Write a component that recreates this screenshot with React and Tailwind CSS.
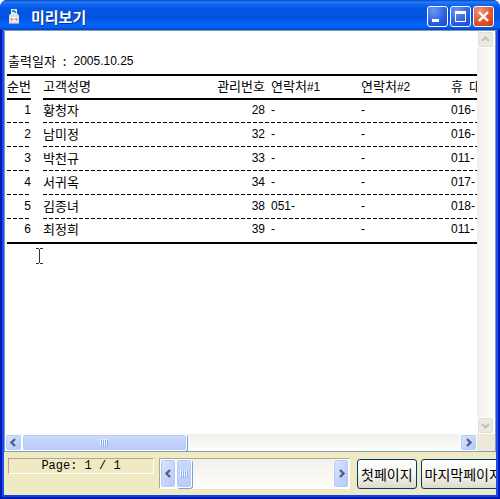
const customers = [
  { no: 1, name: '황청자', code: 28, tel1: '-', tel2: '-', mobile: '016-' },
  { no: 2, name: '남미정', code: 32, tel1: '-', tel2: '-', mobile: '016-' },
  { no: 3, name: '박천규', code: 33, tel1: '-', tel2: '-', mobile: '011-' },
  { no: 4, name: '서귀옥', code: 34, tel1: '-', tel2: '-', mobile: '017-' },
  { no: 5, name: '김종녀', code: 38, tel1: '051-', tel2: '-', mobile: '018-' },
  { no: 6, name: '최정희', code: 39, tel1: '-', tel2: '-', mobile: '011-' },
];

const CHEVRONS = {
  up: 'M1 6 L4.5 2.5 L8 6',
  down: 'M1 3 L4.5 6.5 L8 3',
  left: 'M6 1 L2.5 4.5 L6 8',
  right: 'M3 1 L6.5 4.5 L3 8',
};

const ArrowButton = ({ direction, label, disabled, className = '' }) => (
  <button
    type="button"
    aria-label={label}
    disabled={disabled}
    className={`flex shrink-0 items-center justify-center rounded-[3px] border border-white ${
      disabled
        ? 'bg-[#ecebe2] text-[#c5c4b8] shadow-[inset_0_0_0_1px_#dfded3]'
        : 'bg-gradient-to-br from-[#dce6fe] to-[#b2c7f8] text-[#4d6185] shadow-[inset_0_0_0_1px_#b7caf5]'
    } ${className}`}
  >
    <svg width="9" height="9" viewBox="0 0 9 9" fill="none" stroke="currentColor" strokeWidth="2.4">
      <path d={CHEVRONS[direction]} />
    </svg>
  </button>
);

const Grip = () => (
  <svg width="9" height="8" viewBox="0 0 9 8" shapeRendering="crispEdges">
    <path d="M0.5 0v7M2.5 0v7M4.5 0v7M6.5 0v7" stroke="#eef4fe" />
    <path d="M1.5 1v7M3.5 1v7M5.5 1v7M7.5 1v7" stroke="#8cb0f8" />
  </svg>
);

const Thumb = ({ className = '' }) => (
  <div
    className={`flex items-center justify-center rounded-[3px] border border-white bg-gradient-to-b from-[#cbdafd] to-[#b9cbf8] shadow-[inset_0_0_0_1px_#b7caf5,1px_1px_0_#7f9fd6] ${className}`}
  >
    <Grip />
  </div>
);

const CaptionButton = ({ label, className, children }) => (
  <button
    type="button"
    aria-label={label}
    className={`h-[21px] w-[21px] rounded-[3px] border border-white ${className}`}
  >
    <svg width="19" height="19" viewBox="0 0 19 19" fill="none" stroke="white">
      {children}
    </svg>
  </button>
);

const TitleBar = () => (
  <header className="flex h-[30px] shrink-0 items-center bg-[linear-gradient(180deg,#0148c8_0%,#2c7df5_7%,#1168f3_14%,#0357e4_28%,#0254e0_60%,#0364fb_80%,#0361f4_90%,#0143c0_100%)] pt-[3px] pr-[6px] pl-[7px]">
    <svg width="14" height="16" viewBox="0 0 14 16" aria-hidden="true">
      <path d="M4 0h6v5H4z" fill="#d6efff" />
      <path d="M5 1h3v2H5z" fill="#2fa08a" />
      <path d="M7 2h2v2H7z" fill="#4a8fe0" />
      <path d="M3 5h8l1 2v8H2V7z" fill="#e2e2e6" />
      <path d="M2 14h10v1H2z" fill="#a8a49c" />
      <path d="M4 8h6v4H4z" fill="#fff" />
      <path d="M4.5 11.5v-2l1.5 1 1-1 1 1 1.5-1v2" fill="none" stroke="#d4655e" />
    </svg>
    <h1 className="ml-[10px] grow text-[15px] leading-5 font-bold text-white [text-shadow:1px_1px_0_#0b2f83]">
      미리보기
    </h1>
    <div className="flex gap-[2px]">
      <CaptionButton label="최소화" className="bg-[radial-gradient(circle_at_30%_20%,#6c97f2,#2a5fe0_60%,#1c49cf)]">
        <path d="M4 13.5h7" strokeWidth="3" />
      </CaptionButton>
      <CaptionButton label="최대화" className="bg-[radial-gradient(circle_at_30%_20%,#6c97f2,#2a5fe0_60%,#1c49cf)]">
        <path d="M4.5 5v9.5h10V5" />
        <path d="M4 5.5h11" strokeWidth="3" />
      </CaptionButton>
      <CaptionButton label="닫기" className="bg-[radial-gradient(circle_at_30%_20%,#ee9478,#e0522c_60%,#c93a12)]">
        <path d="M5 5l9 9M14 5l-9 9" strokeWidth="2.4" />
      </CaptionButton>
    </div>
  </header>
);

const headRule = 'border-b-2 border-black';
const dashRule =
  'bg-[repeating-linear-gradient(90deg,#000_0_4px,transparent_4px_6px)] bg-[length:100%_1px] bg-bottom bg-no-repeat';
const numeric = "font-['Liberation_Sans',sans-serif] text-[12px]";

const ReportTable = () => (
  <table className="w-[534px] table-fixed border-separate border-spacing-0 border-y-2 border-black text-left">
    <colgroup>
      <col className="w-[24px]" />
      <col className="w-[12px]" />
      <col className="w-[144px]" />
      <col className="w-[84px]" />
      <col className="w-[90px]" />
      <col className="w-[90px]" />
      <col className="w-[90px]" />
    </colgroup>
    <thead>
      <tr className="h-6 whitespace-nowrap [&>th]:p-0 [&>th]:pb-[2px] [&>th]:font-normal">
        <th scope="col" className={headRule}>순번</th>
        <td className="p-0" />
        <th scope="col" className={headRule}>고객성명</th>
        <th scope="col" className={`${headRule} pr-[6px]! text-right`}>관리번호</th>
        <th scope="col" className={headRule}>
          연락처<span className={`${numeric} leading-3`}>#1</span>
        </th>
        <th scope="col" className={headRule}>
          연락처<span className={`${numeric} leading-3`}>#2</span>
        </th>
        <th scope="col" className={headRule}>
          <span className="flex gap-[6px]">
            <span>휴</span>
            <span>대</span>
            <span>폰</span>
          </span>
        </th>
      </tr>
    </thead>
    <tbody>
      {customers.map((c, i) => {
        const rule = i < customers.length - 1 ? dashRule : '';
        return (
          <tr key={c.no} className="h-6 first:h-[23px] last:h-[23px] [&>td]:p-0 [&>td]:pb-[3px]">
            <td className={`${rule} ${numeric} leading-5 text-right`}>{c.no}</td>
            <td />
            <td className={rule}>{c.name}</td>
            <td className={`${rule} ${numeric} leading-5 pr-[6px]! text-right`}>{c.code}</td>
            <td className={`${rule} ${numeric} leading-5`}>{c.tel1}</td>
            <td className={`${rule} ${numeric} leading-5`}>{c.tel2}</td>
            <td className={`${rule} ${numeric} leading-5`}>{c.mobile}</td>
          </tr>
        );
      })}
    </tbody>
  </table>
);

const Preview = () => (
  <main className="relative min-w-0 grow overflow-hidden bg-white pt-[20px] pl-[2px] text-[13px] leading-5 text-black">
    <p className="flex gap-[7px] pb-[3px] pl-[1px]">
      <span>출력일자</span>
      <span>:</span>
      <time dateTime="2005-10-25" className={`${numeric} leading-5`}>2005.10.25</time>
    </p>
    <ReportTable />
    <svg
      width="7"
      height="16"
      viewBox="0 0 7 16"
      fill="none"
      stroke="#333"
      shapeRendering="crispEdges"
      className="absolute top-[217px] left-[31px]"
    >
      <path d="M0 0.5h3M4 0.5h3M3.5 1v14M0 15.5h3M4 15.5h3" />
    </svg>
  </main>
);

const PageButton = ({ children }) => (
  <button
    type="button"
    className="h-[30px] shrink-0 rounded-[3px] border border-[#003c74] bg-gradient-to-b from-white via-[#f5f5f0] to-[#dedacc] px-[3px] text-[14px] leading-5 whitespace-nowrap text-black"
  >
    {children}
  </button>
);

const Footer = () => (
  <footer className="flex h-[44px] shrink-0 items-start overflow-hidden border-t border-[#7f9db9] bg-[#f0eac2] pt-[6px] pl-[4px]">
    <output className="h-[16px] w-[146px] shrink-0 border border-t-[#aca899] border-r-white border-b-white border-l-[#aca899] text-center font-['Liberation_Mono','Noto_Sans_CJK_KR',monospace] text-[12px] leading-[14px] text-black">
      Page: 1 / 1
    </output>
    <div
      role="group"
      aria-label="페이지 이동"
      className="mr-[7px] ml-[5px] flex h-[31px] min-w-0 grow border border-t-[#aca899] border-r-white border-b-white border-l-[#aca899] bg-gradient-to-b from-[#f1f0ea] to-[#fefefb]"
    >
      <ArrowButton direction="left" label="이전 페이지" className="w-[16px]" />
      <Thumb className="w-[16px]" />
      <ArrowButton direction="right" label="다음 페이지" className="ml-auto w-[16px]" />
    </div>
    <nav className="mt-[1px] flex w-[139px] shrink-0 gap-[4px] overflow-hidden">
      <PageButton>첫페이지</PageButton>
      <PageButton>마지막페이지</PageButton>
    </nav>
  </footer>
);

const App = () => (
  <div className="flex h-screen flex-col overflow-hidden rounded-t-[7px] bg-[#0347e0] font-['Noto_Sans_CJK_KR',sans-serif]">
    <TitleBar />
    <div className="flex min-h-0 grow flex-col border-x-2 border-b-2 border-[#0019b4]">
      <div className="flex min-h-0 grow flex-col border-x-2 border-t border-b-2 border-x-[#1152ee] border-t-[#7f9db9] border-b-[#0a45e6]">
        <div className="flex min-h-0 grow border-x border-[#7f9db9]">
          <div className="flex min-w-0 grow flex-col">
            <Preview />
            <div className="flex h-[17px] shrink-0 bg-gradient-to-b from-[#f1f0ea] to-[#fefefb]">
              <ArrowButton direction="left" label="왼쪽으로 스크롤" className="w-[17px]" />
              <Thumb className="w-[35%]" />
              <ArrowButton direction="right" label="오른쪽으로 스크롤" className="ml-auto w-[17px]" />
            </div>
          </div>
          <div className="flex w-[18px] shrink-0 flex-col justify-between bg-gradient-to-r from-[#f1f0ea] to-[#fefefb]">
            <ArrowButton direction="up" label="위로 스크롤" disabled className="h-[17px] w-[17px]" />
            <div>
              <ArrowButton direction="down" label="아래로 스크롤" disabled className="h-[17px] w-[17px]" />
              <div className="h-[17px] bg-[#ece9d8]" />
            </div>
          </div>
        </div>
        <Footer />
      </div>
    </div>
  </div>
);

export default App;
